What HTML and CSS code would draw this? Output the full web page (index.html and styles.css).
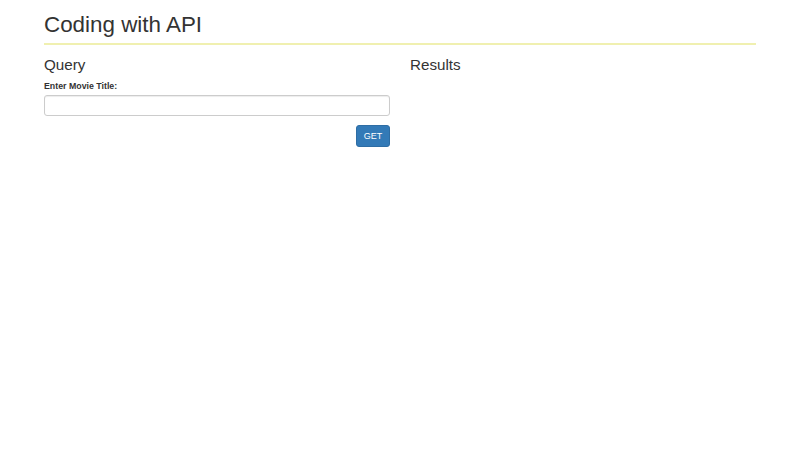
FILE: index.html
```html
<!DOCTYPE html>
<html>
<head>
<meta charset="utf-8">
<title>Coding with API</title>
<link rel="stylesheet" href="styles.css">
</head>
<body>
<div class="container">
  <header class="page-header">
    <h1 class="title">Coding with API</h1>
  </header>
  <div class="row">
    <section class="col">
      <h3 class="section-title">Query</h3>
      <form class="query-form">
        <label class="field-label" for="title">Enter Movie Title:</label>
        <input class="field-input" id="title" type="text">
        <div class="actions">
          <button class="btn-get" type="button">GET</button>
        </div>
      </form>
    </section>
    <section class="col">
      <h3 class="section-title">Results</h3>
    </section>
  </div>
</div>
</body>
</html>
```
FILE: styles.css
```css
html, body {
  margin: 0;
  padding: 0;
  background: #fff;
  color: #333;
  font-family: "Liberation Sans", Arial, sans-serif;
}
.container {
  width: 712px;
  margin: 0 auto;
}
.page-header {
  padding-top: 12px;
  padding-bottom: 5px;
  border-bottom: 2px solid #f0f0b0;
}
.title {
  margin: 0;
  font-size: 22.4px;
  font-weight: 400;
  line-height: 26px;
}
.row {
  display: grid;
  grid-template-columns: 346px 346px;
  column-gap: 20px;
  margin-top: 11px;
}
.section-title {
  margin: 0;
  font-size: 15.2px;
  font-weight: 400;
  line-height: 18px;
}
.query-form {
  display: flex;
  flex-direction: column;
  margin-top: 7px;
}
.field-label {
  font-size: 8.8px;
  font-weight: 700;
  line-height: 11px;
  margin-bottom: 3px;
}
.field-input {
  box-sizing: border-box;
  height: 21px;
  width: 100%;
  border: 1px solid #ccc;
  border-radius: 3px;
  box-shadow: inset 0 1px 1px rgba(0,0,0,0.075);
  padding: 3px 8px;
  font-size: 10px;
}
.actions {
  display: flex;
  justify-content: flex-end;
  margin-top: 9px;
}
.btn-get {
  box-sizing: border-box;
  width: 34px;
  height: 22px;
  background: #337ab7;
  border: 1px solid #2e6da4;
  border-radius: 3px;
  color: #fff;
  font-family: "Liberation Sans", Arial, sans-serif;
  font-size: 9px;
  padding: 0;
}
```
